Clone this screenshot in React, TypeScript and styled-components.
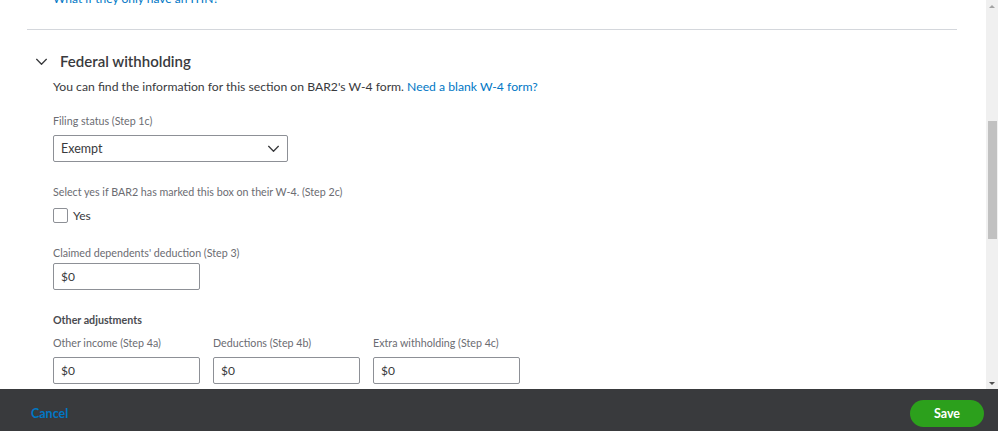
import styled, { createGlobalStyle } from 'styled-components';

const GlobalStyle = createGlobalStyle`
  html, body {
    margin: 0;
    padding: 0;
    height: 100%;
    overflow: hidden;
    background: #ffffff;
  }
  body {
    font-family: Lato, "Open Sans", Arial, sans-serif;
    color: #393a3d;
  }
`;

const otherFields = [
  { label: 'Other income (Step 4a)', value: '$0' },
  { label: 'Deductions (Step 4b)', value: '$0' },
  { label: 'Extra withholding (Step 4c)', value: '$0' },
];

const ChevronDown = ({ size = 12 }: { size?: number }) => (
  <svg width={size} height={size} viewBox="0 0 12 12" fill="none">
    <path d="M1.5 4 L6 8.5 L10.5 4" stroke="#393a3d" strokeWidth="1.2" strokeLinecap="round" strokeLinejoin="round" />
  </svg>
);

const App = () => {
  return (
    <>
      <GlobalStyle />
      <Screen>
        <Body>
          <Content>
            <TopLink>What if they only have an ITIN?</TopLink>
            <Divider />

            <SectionHeader>
              <ChevronDown size={13} />
              <SectionTitle>Federal withholding</SectionTitle>
            </SectionHeader>
            <Intro>
              You can find the information for this section on BAR2's W-4 form. <Link>Need a blank W-4 form?</Link>
            </Intro>

            <Field>
              <Label>Filing status (Step 1c)</Label>
              <Select>
                <span>Exempt</span>
                <ChevronDown size={13} />
              </Select>
            </Field>

            <Field $gap={22}>
              <Label>Select yes if BAR2 has marked this box on their W-4. (Step 2c)</Label>
              <CheckRow>
                <CheckBox />
                <span>Yes</span>
              </CheckRow>
            </Field>

            <Field $gap={22}>
              <Label $tight>Claimed dependents' deduction (Step 3)</Label>
              <TextInput>$0</TextInput>
            </Field>

            <GroupTitle>Other adjustments</GroupTitle>
            <InputRow>
              {otherFields.map(f => (
                <Field key={f.label} $gap={0}>
                  <Label>{f.label}</Label>
                  <TextInput>{f.value}</TextInput>
                </Field>
              ))}
            </InputRow>
          </Content>

          <ScrollTrack>
            <ArrowUp />
            <ThumbArea>
              <Thumb />
            </ThumbArea>
            <ArrowDown />
          </ScrollTrack>
        </Body>

        <Footer>
          <CancelLink>Cancel</CancelLink>
          <SaveButton>Save</SaveButton>
        </Footer>
      </Screen>
    </>
  );
};

export default App;

// ───────── Styled Components ─────────

const Screen = styled.div`
  display: flex;
  flex-direction: column;
  width: 998px;
  height: 431px;
`;

const Body = styled.div`
  display: flex;
  height: 389px;
  overflow: hidden;
`;

const Content = styled.div`
  flex: 1;
  padding: 0 29px 0 27px;
  overflow: hidden;
`;

const TopLink = styled.div`
  margin: -9px 0 0 26px;
  font-size: 12px;
  line-height: 16px;
  color: #0077c5;
`;

const Divider = styled.div`
  margin-top: 22px;
  height: 1px;
  background: #d4d7dc;
`;

const SectionHeader = styled.div`
  display: flex;
  align-items: center;
  gap: 12px;
  margin: 19px 0 0 8px;
  height: 24px;
`;

const SectionTitle = styled.h2`
  margin: 0;
  font-size: 15px;
  font-weight: 600;
  color: #393a3d;
`;

const Intro = styled.p`
  margin: 5px 0 0 26px;
  font-size: 12.2px;
  line-height: 18px;
  color: #393a3d;
`;

const Link = styled.a`
  color: #0077c5;
  cursor: pointer;
`;

const Field = styled.div<{ $gap?: number }>`
  display: flex;
  flex-direction: column;
  margin-top: ${p => (p.$gap ?? 17)}px;
  padding-left: ${p => (p.$gap === 0 ? 0 : 26)}px;
`;

const Label = styled.label<{ $tight?: boolean }>`
  font-size: 10.7px;
  line-height: 16px;
  color: #6b6c72;
  margin-bottom: ${p => (p.$tight ? 2 : 6)}px;
`;

const Select = styled.div`
  box-sizing: border-box;
  width: 235px;
  height: 27px;
  display: flex;
  align-items: center;
  justify-content: space-between;
  padding: 0 7px 0 7px;
  border: 1px solid #8d9096;
  border-radius: 2px;
  font-size: 12.5px;
  color: #393a3d;
`;

const CheckRow = styled.div`
  display: flex;
  align-items: center;
  gap: 5px;
  font-size: 12px;
  color: #393a3d;
  margin-top: 2px;
`;

const CheckBox = styled.span`
  box-sizing: border-box;
  width: 15px;
  height: 15px;
  border: 1px solid #8d9096;
  border-radius: 2px;
  background: #fff;
`;

const TextInput = styled.div`
  box-sizing: border-box;
  width: 147px;
  height: 27px;
  display: flex;
  align-items: center;
  padding: 0 7px;
  border: 1px solid #8d9096;
  border-radius: 2px;
  font-size: 12px;
  color: #393a3d;
`;

const GroupTitle = styled.div`
  margin: 22px 0 0 26px;
  font-size: 10.7px;
  font-weight: 700;
  line-height: 16px;
  color: #4a4b50;
`;

const InputRow = styled.div`
  display: flex;
  gap: 13px;
  margin: 7px 0 0 26px;
`;

const ScrollTrack = styled.div`
  width: 12px;
  display: flex;
  flex-direction: column;
  background: #f0f0f0;
`;

const ArrowUp = styled.div`
  height: 12px;
  display: flex;
  align-items: center;
  justify-content: center;
  &::before {
    content: '';
    border-left: 3px solid transparent;
    border-right: 3px solid transparent;
    border-bottom: 3px solid #a3a3a3;
  }
`;

const ArrowDown = styled(ArrowUp)`
  &::before {
    border-bottom: none;
    border-top: 3px solid #505050;
  }
`;

const ThumbArea = styled.div`
  flex: 1;
  padding: 109px 1px 0 2px;
`;

const Thumb = styled.div`
  height: 118px;
  background: #c1c1c1;
`;

const Footer = styled.div`
  flex: 1;
  display: flex;
  align-items: center;
  justify-content: space-between;
  padding: 0 14px 0 31px;
  background: #393a3d;
`;

const CancelLink = styled.a`
  font-size: 12.5px;
  font-weight: 700;
  color: #0077c5;
  cursor: pointer;
  margin-top: 6px;
`;

const SaveButton = styled.button`
  width: 74px;
  height: 27px;
  margin-top: 7px;
  border: none;
  border-radius: 14px;
  background: #2ca01c;
  color: #fff;
  font-family: inherit;
  font-size: 12.5px;
  font-weight: 700;
  cursor: pointer;
`;
